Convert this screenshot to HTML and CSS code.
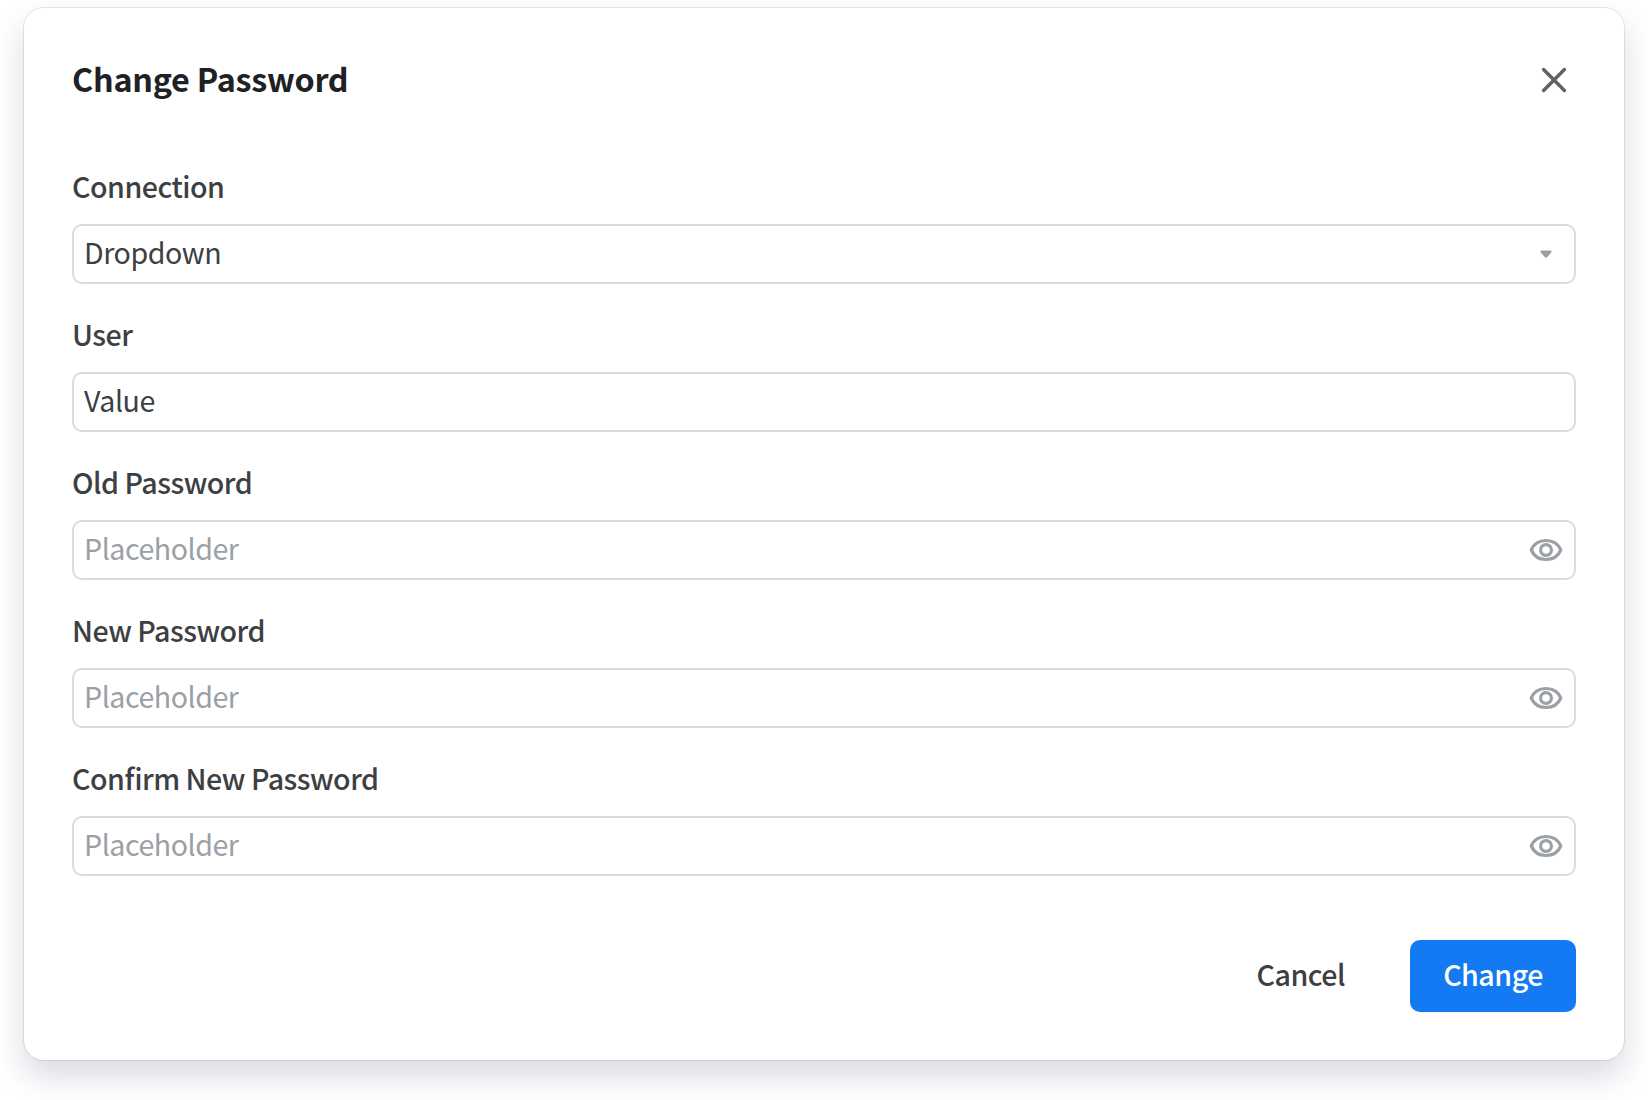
FILE: index.html
```html
<!DOCTYPE html>
<html lang="en">
<head>
<meta charset="utf-8">
<title>Change Password</title>
<link rel="stylesheet" href="styles.css">
</head>
<body>
<svg class="sprite" aria-hidden="true">
  <symbol id="eye" viewBox="0 0 36 36">
    <path d="M3.200 18C5.800 12 11.500 8.500 18 8.500S30.200 12 32.800 18C30.200 24 24.500 27.500 18 27.500S5.800 24 3.200 18Z"/>
    <circle cx="18" cy="18" r="5.400"/>
  </symbol>
</svg>
<form class="dialog">
  <header class="header">
    <h1 class="title">Change Password</h1>
    <button class="close" type="button" aria-label="Close">
      <svg class="cross" viewBox="0 0 28 28"><path d="M3.600 3.600 24.400 24.400M24.400 3.600 3.600 24.400"/></svg>
    </button>
  </header>
  <div class="fields">
    <div class="field">
      <span class="label">Connection</span>
      <div class="control"><span class="value">Dropdown</span><svg class="caret" viewBox="0 0 12 8"><path d="M1.500 1.500h9v.4L6.700 6.200q-.7.600-1.400 0L1.500 1.900Z"/></svg></div>
    </div>
    <div class="field">
      <span class="label">User</span>
      <div class="control"><span class="value">Value</span></div>
    </div>
    <div class="field">
      <span class="label">Old Password</span>
      <div class="control placeholder"><span class="value">Placeholder</span><svg class="eye"><use href="#eye"/></svg></div>
    </div>
    <div class="field">
      <span class="label">New Password</span>
      <div class="control placeholder"><span class="value">Placeholder</span><svg class="eye"><use href="#eye"/></svg></div>
    </div>
    <div class="field">
      <span class="label">Confirm New Password</span>
      <div class="control placeholder"><span class="value">Placeholder</span><svg class="eye"><use href="#eye"/></svg></div>
    </div>
  </div>
  <footer class="footer">
    <button class="button" type="button">Cancel</button>
    <button class="button primary" type="button">Change</button>
  </footer>
</form>
</body>
</html>
```

FILE: styles.css
```css
* { box-sizing: border-box; }
body {
  margin: 0;
  padding: 8px 24px 0;
  height: 1100px;
  overflow: hidden;
  background: #fff;
  color: #3c4043;
  font-family: "Noto Sans CJK SC", "Noto Sans", sans-serif;
  font-feature-settings: "liga" 1;
}
.sprite { display: none; }
.dialog {
  display: flex;
  flex-direction: column;
  width: 1600px;
  height: 1052px;
  padding: 48px;
  border-radius: 20px;
  background: #fff;
  box-shadow: 0 0 0 1px rgba(20, 35, 70, .1), 0 16px 32px rgba(20, 35, 70, .17);
}
.header {
  display: flex;
  align-items: center;
  justify-content: space-between;
  height: 48px;
}
.title {
  margin: 0;
  padding-bottom: 4px;
  font-size: 32.3px;
  font-weight: 700;
  line-height: 44px;
  letter-spacing: -.24px;
  color: #202124;
}
.close {
  display: flex;
  padding: 8px;
  border: 0;
  background: none;
}
.cross { width: 28px; height: 28px; fill: none; stroke: #5f6368; stroke-width: 3.500; stroke-linecap: round; }
.fields { display: flex; flex-direction: column; gap: 32px; margin-top: 64px; }
.field { display: flex; flex-direction: column; gap: 20px; }
.label { font-size: 28.6px; font-weight: 500; line-height: 36px; letter-spacing: -.5px; }
.control {
  display: flex;
  align-items: center;
  justify-content: space-between;
  height: 60px;
  padding: 0 10px;
  border: 2px solid #dadbe0;
  border-radius: 10px;
  font-size: 28.6px;
  line-height: 40px;
  letter-spacing: -.46px;
}
.value { padding-bottom: 4px; }
.placeholder { color: #9aa0a6; }
.caret { width: 12px; height: 8px; margin-right: 12px; fill: #9aa0a6; stroke: #9aa0a6; stroke-width: 2; stroke-linejoin: round; }
.eye { width: 36px; height: 36px; fill: none; stroke: #9aa0a6; stroke-width: 3.200; stroke-linejoin: round; }
.footer { display: flex; justify-content: flex-end; gap: 33px; margin-top: auto; }
.button {
  height: 72px;
  padding: 0 32px 4px;
  border: 0;
  border-radius: 10px;
  background: none;
  color: #3c4043;
  font: 500 28.6px/40px "Noto Sans CJK SC", "Noto Sans", sans-serif;
  letter-spacing: -.5px;
}
.primary { width: 166px; background: #147af3; color: #fff; }
```
